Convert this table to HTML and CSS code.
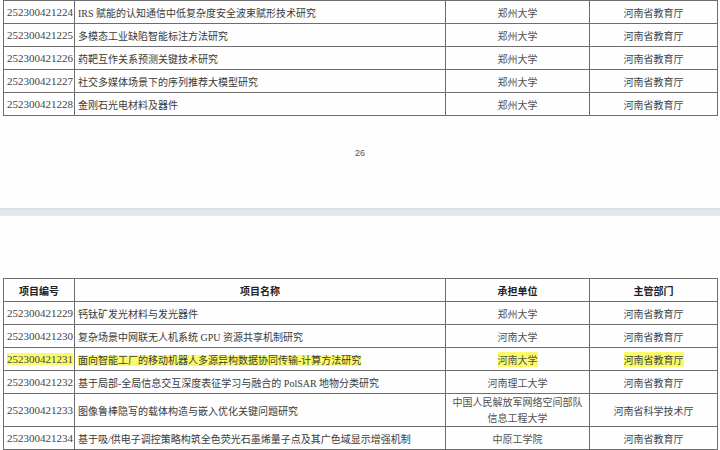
FILE: index.html
```html
<!DOCTYPE html>
<html lang="zh-CN">
<head>
<meta charset="utf-8">
<title>项目列表</title>
<link rel="stylesheet" href="styles.css">
</head>
<body>
<div class="page page-top">
  <table class="grid">
    <colgroup><col class="c-id"><col class="c-name"><col class="c-unit"><col class="c-dept"></colgroup>
    <tbody>
      <tr><td class="id">252300421224</td><td class="name">IRS 赋能的认知通信中低复杂度安全波束赋形技术研究</td><td class="unit">郑州大学</td><td class="dept">河南省教育厅</td></tr>
      <tr><td class="id">252300421225</td><td class="name">多模态工业缺陷智能标注方法研究</td><td class="unit">郑州大学</td><td class="dept">河南省教育厅</td></tr>
      <tr><td class="id">252300421226</td><td class="name">药靶互作关系预测关键技术研究</td><td class="unit">郑州大学</td><td class="dept">河南省教育厅</td></tr>
      <tr><td class="id">252300421227</td><td class="name">社交多媒体场景下的序列推荐大模型研究</td><td class="unit">郑州大学</td><td class="dept">河南省教育厅</td></tr>
      <tr><td class="id">252300421228</td><td class="name">金刚石光电材料及器件</td><td class="unit">郑州大学</td><td class="dept">河南省教育厅</td></tr>
    </tbody>
  </table>
  <div class="pagenum">26</div>
</div>
<div class="sep"></div>
<div class="page page-bottom">
  <table class="grid">
    <colgroup><col class="c-id"><col class="c-name"><col class="c-unit"><col class="c-dept"></colgroup>
    <thead>
      <tr><th>项目编号</th><th>项目名称</th><th>承担单位</th><th>主管部门</th></tr>
    </thead>
    <tbody>
      <tr><td class="id">252300421229</td><td class="name">钙钛矿发光材料与发光器件</td><td class="unit">郑州大学</td><td class="dept">河南省教育厅</td></tr>
      <tr><td class="id">252300421230</td><td class="name">复杂场景中网联无人机系统 GPU 资源共享机制研究</td><td class="unit">河南大学</td><td class="dept">河南省教育厅</td></tr>
      <tr><td class="id"><span class="hl">252300421231</span></td><td class="name"><span class="hl">面向智能工厂的移动机器人多源异构数据协同传输-计算方法研究</span></td><td class="unit"><span class="hl">河南大学</span></td><td class="dept"><span class="hl">河南省教育厅</span></td></tr>
      <tr><td class="id">252300421232</td><td class="name">基于局部-全局信息交互深度表征学习与融合的 PolSAR 地物分类研究</td><td class="unit">河南理工大学</td><td class="dept">河南省教育厅</td></tr>
      <tr class="tall"><td class="id">252300421233</td><td class="name">图像鲁棒隐写的载体构造与嵌入优化关键问题研究</td><td class="unit">中国人民解放军网络空间部队<br>信息工程大学</td><td class="dept">河南省科学技术厅</td></tr>
      <tr><td class="id">252300421234</td><td class="name">基于吸/供电子调控策略构筑全色荧光石墨烯量子点及其广色域显示增强机制</td><td class="unit">中原工学院</td><td class="dept">河南省教育厅</td></tr>
    </tbody>
  </table>
</div>
</body>
</html>
```
FILE: styles.css
```css
* { box-sizing: border-box; }
html, body { margin: 0; padding: 0; background: #fefefe; }
body {
  width: 720px;
  height: 450px;
  overflow: hidden;
  color: #3c3c3c;
  font-family: "Liberation Serif", "Noto Sans CJK SC", serif;
}
.page { background: #fefefe; }
.page-top {
  height: 208px;
  padding: 0 3px 0 3px;
}
.page-bottom {
  padding: 62px 3px 0 3px;
}
.sep {
  height: 8px;
  background: linear-gradient(#d4dbe2, #e2e7ec 30%, #e4e9ee);
}
.grid {
  width: 714px;
  table-layout: fixed;
  border-collapse: collapse;
}
.c-id { width: 71px; }
.c-name { width: 371px; }
.c-unit { width: 144px; }
.c-dept { width: 128px; }
.grid td, .grid th {
  border: 1px solid #6e6e6e;
  height: 23px;
  padding: 0 3px;
  vertical-align: middle;
  white-space: nowrap;
  overflow: hidden;
}
.grid td + td, .grid th + th { border-left-color: #8a8a8a; }
.grid th {
  font-family: "Noto Sans CJK SC", sans-serif;
  font-weight: 700;
  font-size: 10px;
  color: #222;
  text-align: center;
  height: 23px;
}
.id {
  font-size: 11px;
  color: #444;
  padding-left: 3px;
}
.name {
  font-size: 10px;
  padding-left: 3px;
  color: #3a3a3a;
}
.unit, .dept {
  text-align: center;
  font-family: "Noto Sans CJK SC", sans-serif;
  font-size: 10px;
  color: #505050;
}
.dept { color: #444; }
.tall td { height: 32px; }
.tall .unit { line-height: 16px; }
.hl { background: #fbfb6a; }
.pagenum {
  margin-top: 31px;
  text-align: center;
  font-size: 9px;
  line-height: 12px;
  color: #555;
  font-family: "Liberation Sans Narrow", "Liberation Sans", sans-serif;
}
```
